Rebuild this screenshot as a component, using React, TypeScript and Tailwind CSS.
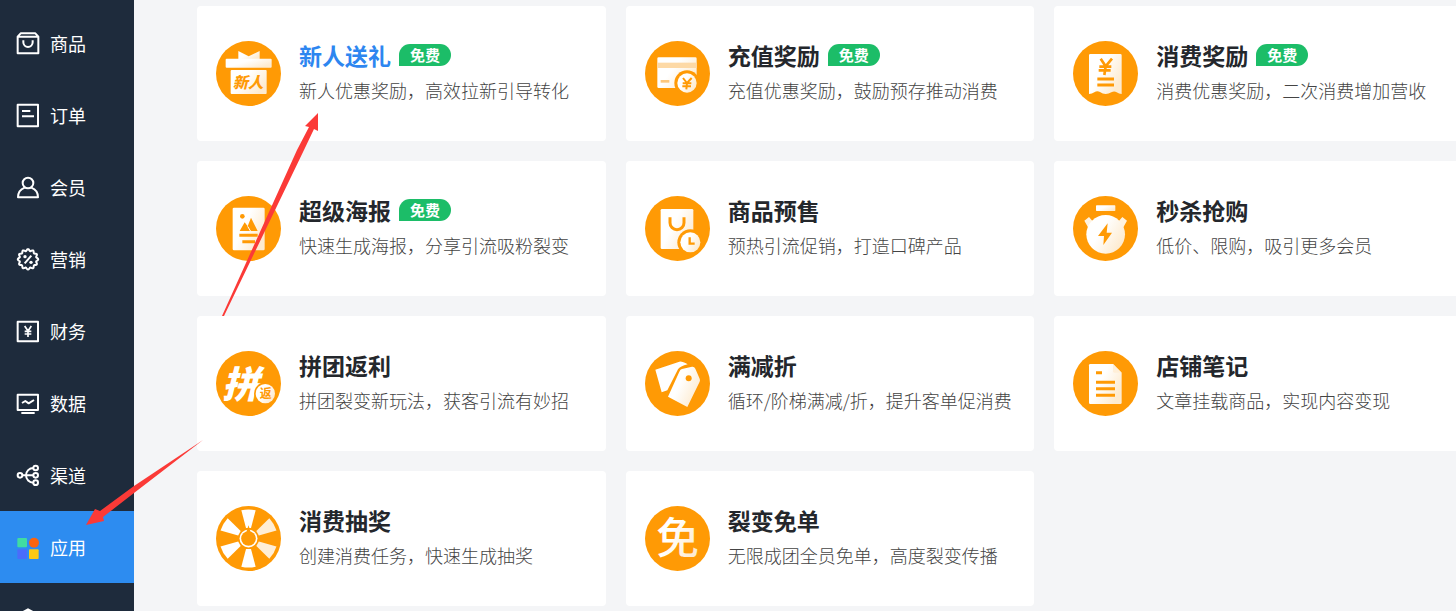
import type { ReactNode } from "react";

const ORANGE = "#ff9a05";

/* ---------- sidebar icons ---------- */

function NavIcon({ top, children }: { top: number; children: ReactNode }) {
  return (
    <svg
      viewBox={`51 ${top} 66 66`}
      className="size-[22px] shrink-0 overflow-visible"
      fill="none"
      stroke="#fff"
      strokeWidth="6"
      strokeLinejoin="round"
      aria-hidden="true"
    >
      {children}
    </svg>
  );
}

const sealPath = (() => {
  const points: string[] = [];
  for (let i = 0; i <= 120; i++) {
    const a = (i / 120) * Math.PI * 2;
    const r = 28 + 2.6 * Math.cos(a * 12);
    points.push(`${(84 + r * Math.sin(a)).toFixed(1)} ${(778 - r * Math.cos(a)).toFixed(1)}`);
  }
  return `M${points.join("L")}Z`;
})();

const navItems: { label: string; active?: boolean; icon: ReactNode }[] = [
  {
    label: "商品",
    icon: (
      <NavIcon top={96}>
        <path d="M53 110L62 100H106L115 110V160H53ZM53 110H115M70 121V127A14 14 0 0 0 98 127V121" />
      </NavIcon>
    ),
  },
  {
    label: "订单",
    icon: (
      <NavIcon top={312}>
        <path d="M53 314H114V379H53ZM66 333H91M66 349H102" />
      </NavIcon>
    ),
  },
  {
    label: "会员",
    icon: (
      <NavIcon top={528}>
        <circle cx="84" cy="549" r="16" />
        <path d="M74 563C61 568 54 578 54 592H114C114 578 107 568 94 563" />
      </NavIcon>
    ),
  },
  {
    label: "营销",
    icon: (
      <NavIcon top={744}>
        <path d={sealPath} />
        <path d="M94 767L74 790" />
        <circle cx="75" cy="770" r="5" fill="#fff" stroke="none" />
        <circle cx="93" cy="787" r="5" fill="#fff" stroke="none" />
      </NavIcon>
    ),
  },
  {
    label: "财务",
    icon: (
      <NavIcon top={60}>
        <path d="M53 65H114V124H53Z" />
        <path d="M74 78L84 93L94 78M84 93V111M74 94H94M74 102H94" strokeWidth="5" />
      </NavIcon>
    ),
  },
  {
    label: "数据",
    icon: (
      <NavIcon top={276}>
        <path d="M53 284H114V330H53ZM64 339H104M66 309L76 303L86 310L102 300" />
      </NavIcon>
    ),
  },
  {
    label: "渠道",
    icon: (
      <NavIcon top={492}>
        <circle cx="60" cy="526" r="7" />
        <circle cx="107" cy="504" r="7" />
        <circle cx="107" cy="526" r="7" />
        <circle cx="107" cy="548" r="7" />
        <path d="M67 526H100M100 504A22 22 0 0 0 100 548" />
      </NavIcon>
    ),
  },
  {
    label: "应用",
    active: true,
    icon: (
      <NavIcon top={708}>
        <g stroke="none">
          <rect x="52" y="714" width="29" height="28" rx="3" fill="#40dca2" />
          <circle cx="102" cy="728" r="15" fill="#fb640d" />
          <rect x="52" y="748" width="29" height="29" rx="3" fill="#4a6cfb" />
          <rect x="87" y="748" width="29" height="29" rx="3" fill="#fcc914" />
        </g>
      </NavIcon>
    ),
  },
  {
    label: "",
    icon: (
      <NavIcon top={0}>
        <path d="M84 4L113 20V48L84 64L55 48V20Z" />
        <circle cx="84" cy="34" r="10" />
      </NavIcon>
    ),
  },
];

/* ---------- application icons ---------- */

function AppIcon({ x, y, children }: { x: number; y: number; children: ReactNode }) {
  return (
    <svg viewBox={`${x} ${y} 195 195`} className="size-[65px] shrink-0" aria-hidden="true">
      <circle cx={x + 97.5} cy={y + 97.5} r="97.5" fill={ORANGE} />
      {children}
    </svg>
  );
}

const CREAM = "url(#cream)";

const glyph = "font-['Noto_Sans_CJK_SC',sans-serif]";

const giftIcon = (
  <AppIcon x={55} y={123}>
    <path d="M122 153L153 169L186 153V178H122Z" fill={CREAM} />
    <rect x="84" y="176" width="138" height="27" rx="3" fill={CREAM} />
    <rect x="99" y="210" width="108" height="72" rx="3" fill={CREAM} />
    <text x="151" y="264" textAnchor="middle" fontSize="46" fontWeight="900" fontStyle="italic" fill={ORANGE} className={glyph}>
      新人
    </text>
  </AppIcon>
);

const rechargeIcon = (
  <AppIcon x={73} y={123}>
    <rect x="110" y="172" width="118" height="92" rx="4" fill={CREAM} />
    <rect x="110" y="188" width="118" height="16" fill="#fdd9a6" />
    <rect x="120" y="240" width="26" height="8" fill="#fdc77c" />
    <circle cx="199" cy="249" r="38" fill={ORANGE} />
    <circle cx="199" cy="249" r="29" fill={CREAM} />
    <path d="M187 234L199 249L213 234M199 249L197 268M186 250H212M185 259H211" fill="none" stroke={ORANGE} strokeWidth="6" />
  </AppIcon>
);

const receiptIcon = (
  <AppIcon x={99} y={123}>
    <path
      d="M151 162H241Q245 162 245 166V282Q237 282 230 277Q223 272 214 277Q206 282 197 282Q188 282 180 276Q171 271 163 277Q156 282 147 282V166Q147 162 151 162Z"
      fill={CREAM}
    />
    <path d="M182 176L197 199L216 176M197 199L193 225M178 200H214M176 211H212" fill="none" stroke={ORANGE} strokeWidth="8" />
    <path d="M172 237H222M172 255H222" stroke={ORANGE} strokeWidth="9" />
  </AppIcon>
);

const posterIcon = (
  <AppIcon x={55} y={123}>
    <rect x="105" y="158" width="96" height="128" rx="4" fill={CREAM} />
    <circle cx="134" cy="184" r="7" fill={ORANGE} />
    <path d="M126 228L141 202L150 214L160 188L180 228Z" fill={ORANGE} />
    <path d="M150 214L159 229" stroke="#fff" strokeWidth="3" />
    <path d="M125 241H180M134 260H172" stroke={ORANGE} strokeWidth="9" />
  </AppIcon>
);

const presaleIcon = (
  <AppIcon x={73} y={123}>
    <rect x="120" y="162" width="98" height="120" rx="4" fill={CREAM} />
    <path d="M148 187V203A21 21 0 0 0 190 203V187" fill="none" stroke={ORANGE} strokeWidth="9" />
    <circle cx="209" cy="262" r="39" fill={ORANGE} />
    <circle cx="209" cy="262" r="30" fill={CREAM} />
    <path d="M207 247V266H222" fill="none" stroke={ORANGE} strokeWidth="7" />
  </AppIcon>
);

const flashIcon = (
  <AppIcon x={101} y={125}>
    <rect x="170" y="153" width="58" height="17" rx="2" fill={CREAM} />
    <path d="M135 199L149 188L164 205L146 219ZM263 199L249 188L234 205L252 219Z" fill="#fff3e0" />
    <circle cx="199" cy="240" r="58" fill={CREAM} />
    <path d="M205 207L176 245H194L192 272L218 235H202Z" fill={ORANGE} />
  </AppIcon>
);

const groupIcon = (
  <AppIcon x={57} y={125}>
    <text x="131" y="266" textAnchor="middle" fontSize="112" fontWeight="900" fontStyle="italic" fill="#fff" className={glyph}>
      拼
    </text>
    <circle cx="205" cy="253" r="34" fill={ORANGE} />
    <circle cx="205" cy="253" r="29" fill={CREAM} />
    <text x="206" y="267" textAnchor="middle" fontSize="36" fontWeight="700" fill={ORANGE} className={glyph}>
      返
    </text>
  </AppIcon>
);

const discountIcon = (
  <AppIcon x={73} y={123}>
    <path d="M104 179L176 155Q184 153 201 163Q178 169 172 178L140 241L123 247Z" fill="#fff" />
    <path d="M184 177L214 170Q221 169 224 176L237 206Q239 211 237 215L200 291L142 260L176 185Q179 178 184 177Z" fill={CREAM} />
    <circle cx="204" cy="205" r="9" fill={ORANGE} />
  </AppIcon>
);

const noteIcon = (
  <AppIcon x={99} y={123}>
    <path d="M151 162H219L245 188V278Q245 282 241 282H151Q147 282 147 278V166Q147 162 151 162Z" fill={CREAM} />
    <path d="M219 162L245 188H223Q219 188 219 184Z" fill="#ffefd8" />
    <path d="M168 188H186M168 217H225M168 236H225M168 256H225" stroke={ORANGE} strokeWidth="9" />
  </AppIcon>
);

const wheelIcon = (
  <AppIcon x={0} y={0}>
    {[0, 60, 120, 180, 240, 300].map((angle) => (
      <path
        key={angle}
        d="M76 13Q97.5 8 119 13L105 66H90Z"
        transform={`rotate(${angle} 97.5 97.5)`}
        fill={angle === 60 || angle === 120 ? "#ffeed5" : "#fff"}
      />
    ))}
    <circle cx="97.5" cy="97.5" r="27" fill="#fff" />
    <path d="M97.5 58L104 79H91Z" fill={ORANGE} />
    <circle cx="97.5" cy="97.5" r="22" fill={ORANGE} />
  </AppIcon>
);

const freeIcon = (
  <AppIcon x={0} y={0}>
    <text x="97.5" y="144" textAnchor="middle" fontSize="128" fontWeight="500" fill={CREAM} className={glyph}>
      免
    </text>
  </AppIcon>
);

/* ---------- data ---------- */

type App = { title: string; desc: string; icon: ReactNode; free?: boolean; current?: boolean };

const apps: App[] = [
  { title: "新人送礼", desc: "新人优惠奖励，高效拉新引导转化", icon: giftIcon, free: true, current: true },
  { title: "充值奖励", desc: "充值优惠奖励，鼓励预存推动消费", icon: rechargeIcon, free: true },
  { title: "消费奖励", desc: "消费优惠奖励，二次消费增加营收", icon: receiptIcon, free: true },
  { title: "超级海报", desc: "快速生成海报，分享引流吸粉裂变", icon: posterIcon, free: true },
  { title: "商品预售", desc: "预热引流促销，打造口碑产品", icon: presaleIcon },
  { title: "秒杀抢购", desc: "低价、限购，吸引更多会员", icon: flashIcon },
  { title: "拼团返利", desc: "拼团裂变新玩法，获客引流有妙招", icon: groupIcon },
  { title: "满减折", desc: "循环/阶梯满减/折，提升客单促消费", icon: discountIcon },
  { title: "店铺笔记", desc: "文章挂载商品，实现内容变现", icon: noteIcon },
  { title: "消费抽奖", desc: "创建消费任务，快速生成抽奖", icon: wheelIcon },
  { title: "裂变免单", desc: "无限成团全员免单，高度裂变传播", icon: freeIcon },
];

function AppCard({ app }: { app: App }) {
  return (
    <a href="#" className="flex min-w-0 items-center gap-[18px] rounded-sm bg-white py-[35px] pl-[19px]">
      {app.icon}
      <div className="flex flex-col gap-[7px] pb-[2px] whitespace-nowrap">
        <div className="flex items-center gap-2">
          <h2 className={`text-[23px] leading-[28px] font-bold ${app.current ? "text-[#2d86f0]" : "text-[#24272c]"}`}>
            {app.title}
          </h2>
          {app.free && (
            <span className="rounded-full rounded-bl-none bg-[#1cbd68] px-[11px] text-[15px] leading-[22px] font-bold text-white">
              免费
            </span>
          )}
        </div>
        <p className="text-[18px] leading-[28px] font-light text-[#444]">{app.desc}</p>
      </div>
    </a>
  );
}

export default function App() {
  return (
    <div className="relative flex h-screen overflow-hidden bg-[#f4f5f7] font-['Noto_Sans_CJK_SC',sans-serif]">
      <svg className="absolute size-0" aria-hidden="true">
        <defs>
          <linearGradient id="cream" x1="0" y1="0" x2="1" y2="0.6">
            <stop offset="0.45" stopColor="#fff" />
            <stop offset="1" stopColor="#fdebd0" />
          </linearGradient>
        </defs>
      </svg>

      <nav className="w-[134px] shrink-0 overflow-hidden bg-[#1e2b3c] pt-[7px]">
        {navItems.map((item) => (
          <a
            key={item.label}
            href="#"
            className={`flex h-18 items-center gap-[11px] pl-[17px] text-[18px] text-white ${item.active ? "bg-[#2d8cf0]" : ""}`}
          >
            {item.icon}
            {item.label}
          </a>
        ))}
      </nav>

      <main className="-mr-[7px] min-w-0 flex-1 pt-[6px] pl-[63px]">
        <div className="grid grid-cols-3 gap-5">
          {apps.map((app) => (
            <AppCard key={app.title} app={app} />
          ))}
        </div>
      </main>

      <svg className="pointer-events-none absolute top-0 left-0 h-[611px] w-[1456px]" viewBox="0 0 1456 611" fill="#fb3a37" aria-hidden="true">
        <path d="M318 113L305 126L309 127L297 150L222 316H224L304 150L314 129L318 131Z" />
        <path d="M86 525L95 509L100 511L134 486L203 440L134 493L103 517L104 521Z" />
      </svg>
    </div>
  );
}
